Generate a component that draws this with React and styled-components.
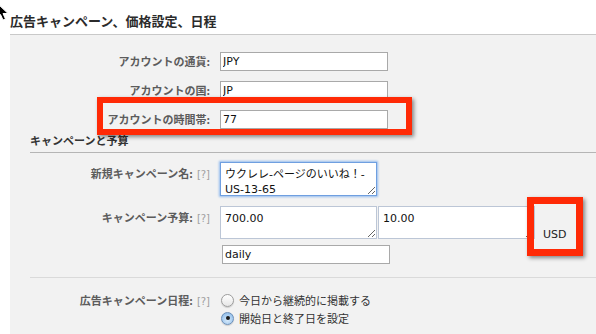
import React from 'react';
import styled, { createGlobalStyle } from 'styled-components';

const GlobalStyle = createGlobalStyle`
  body {
    margin: 0;
    background: #fff;
    font-family: "DejaVu Sans", "Noto Sans CJK JP", sans-serif;
  }
`;

const Page = styled.div`
  position: relative;
  width: 596px;
  height: 334px;
  overflow: hidden;
  display: flex;
  flex-direction: column;
`;

const Title = styled.h2`
  margin: 0 0 0 10px;
  height: 35px;
  padding-top: 12px;
  box-sizing: border-box;
  border-bottom: 1px solid #c9c9c9;
  font-family: "Noto Sans CJK JP", sans-serif;
  font-size: 13px;
  line-height: 17px;
  font-weight: bold;
  color: #2b2b2b;
`;

const Panel = styled.div`
  flex: 1;
  margin-left: 10px;
  padding-top: 17px;
  background: #f2f2f2;
`;

const Group = styled.div`
  display: flex;
  flex-direction: column;
  gap: ${(p) => p.gap}px;
  margin-top: ${(p) => p.top || 0}px;
`;

const Row = styled.div`
  display: grid;
  grid-template-columns: 200px 1fr;
  column-gap: 10px;
`;

const Label = styled.div`
  text-align: right;
  font-family: "Noto Sans CJK JP", sans-serif;
  font-size: 11px;
  font-weight: bold;
  color: #5c5c5c;
  line-height: ${(p) => (p.top ? '15px' : '19px')};
  padding-top: ${(p) => (p.top ? '4px' : '0')};
  white-space: nowrap;
`;

const Help = styled.span`
  margin-left: 4px;
  font-family: "DejaVu Sans", sans-serif;
  font-size: 10px;
  font-weight: normal;
  color: #a0a0a0;
`;

const TextInput = styled.input`
  display: block;
  box-sizing: border-box;
  width: 168px;
  height: 19px;
  margin: 0 0 0 ${(p) => p.shift || 0}px;
  padding: 0 2px;
  border: 1px solid #a9a9a9;
  background: #fff;
  font-family: "DejaVu Sans", "Noto Sans CJK JP", sans-serif;
  font-size: 11px;
  color: #111;
  outline: none;
`;

const Area = styled.textarea`
  display: block;
  box-sizing: border-box;
  width: 157px;
  height: ${(p) => p.h}px;
  margin: 0;
  padding: 4px 4px;
  border: 1px solid ${(p) => (p.focused ? '#6f9fe0' : '#bcc6d6')};
  box-shadow: ${(p) => (p.focused ? '0 0 2px 1px #94bcee' : 'none')};
  background: #fff;
  font-family: "DejaVu Sans", "Noto Sans CJK JP", sans-serif;
  font-size: 11px;
  line-height: 15px;
  color: #111;
  outline: none;
  overflow: hidden;
`;

const Budget = styled.div`
  display: flex;
  flex-direction: column;
  gap: 6px;
`;

const AreaPair = styled.div`
  display: flex;
  align-items: flex-end;
  gap: 1px;
`;

const Currency = styled.span`
  margin: 0 0 -2px 7px;
  font-size: 11px;
  line-height: 13px;
  color: #222;
`;

const SubHeader = styled.h3`
  margin: 3px 0 0 20px;
  padding-bottom: 3px;
  border-bottom: 1px solid #b5b5b5;
  font-family: "Noto Sans CJK JP", sans-serif;
  font-size: 11px;
  line-height: 17px;
  font-weight: bold;
  color: #333;
`;

const Divider = styled.hr`
  margin: 13px 0 0 20px;
  border: 0;
  border-top: 1px solid #dadada;
`;

const Schedule = styled(Row)`
  margin-top: 13px;
`;

const Options = styled.div`
  display: flex;
  flex-direction: column;
`;

const Option = styled.label`
  display: flex;
  align-items: center;
  gap: 5px;
  height: 18px;
  margin-left: 1px;
  font-family: "Noto Sans CJK JP", sans-serif;
  font-size: 11px;
  color: #333;
`;

const Radio = styled.span`
  position: relative;
  box-sizing: border-box;
  width: 13px;
  height: 13px;
  border-radius: 50%;
  border: 1px solid ${(p) => (p.checked ? '#6c8fb8' : '#9c9c9c')};
  background: ${(p) =>
    p.checked
      ? 'radial-gradient(circle at 50% 65%, #d8ebfb 0%, #a9cdf0 55%, #7fb1e3 100%)'
      : 'linear-gradient(#ffffff, #e6e6e6)'};
  box-shadow: 0 1px 1px rgba(0, 0, 0, 0.15);

  &::after {
    content: '';
    display: ${(p) => (p.checked ? 'block' : 'none')};
    position: absolute;
    left: 3.5px;
    top: 3.5px;
    width: 4px;
    height: 4px;
    border-radius: 50%;
    background: #1a1a1a;
  }
`;

const Callout = styled.div`
  position: absolute;
  left: ${(p) => p.x}px;
  top: ${(p) => p.y}px;
  width: ${(p) => p.w}px;
  height: ${(p) => p.h}px;
  box-sizing: border-box;
  border: ${(p) => p.t}px solid #ff2a06;
  box-shadow: 2px 2px 4px rgba(0, 0, 0, 0.45);
  pointer-events: none;
`;

const Cursor = styled.svg`
  position: absolute;
  left: -4px;
  top: 2px;
`;

export default function App() {
  return (
    <>
      <GlobalStyle />
      <Page>
        <Title>広告キャンペーン、価格設定、日程</Title>
        <Panel>
          <Group gap={10}>
            <Row>
              <Label>アカウントの通貨:</Label>
              <TextInput readOnly defaultValue="JPY" />
            </Row>
            <Row>
              <Label>アカウントの国:</Label>
              <TextInput readOnly defaultValue="JP" />
            </Row>
            <Row>
              <Label>アカウントの時間帯:</Label>
              <TextInput readOnly defaultValue="77" />
            </Row>
          </Group>

          <SubHeader>キャンペーンと予算</SubHeader>

          <Group gap={10} top={9}>
            <Row>
              <Label top>新規キャンペーン名:<Help>[?]</Help></Label>
              <Area focused h={34} readOnly defaultValue={'ウクレレ-ページのいいね！-\nUS-13-65'} />
            </Row>
            <Row>
              <Label top>キャンペーン予算:<Help>[?]</Help></Label>
              <Budget>
                <AreaPair>
                  <Area h={33} readOnly defaultValue="700.00" />
                  <Area h={33} readOnly defaultValue="10.00" />
                  <Currency>USD</Currency>
                </AreaPair>
                <TextInput shift={2} readOnly defaultValue="daily" />
              </Budget>
            </Row>
          </Group>

          <Divider />

          <Schedule>
            <Label>広告キャンペーン日程:<Help>[?]</Help></Label>
            <Options>
              <Option><Radio />今日から継続的に掲載する</Option>
              <Option><Radio checked />開始日と終了日を設定</Option>
            </Options>
          </Schedule>
        </Panel>

        <Callout x={97} y={97} w={315} h={38} t={6} />
        <Callout x={527} y={197} w={56} h={59} t={7} />

        <Cursor width="14" height="20" viewBox="0 0 14 20">
          <path d="M1 1 L1 16 L4.5 12.5 L7 18 L9.5 17 L7 11.5 L12 11.5 Z" fill="#000" stroke="#fff" strokeWidth="1" />
        </Cursor>
      </Page>
    </>
  );
}
